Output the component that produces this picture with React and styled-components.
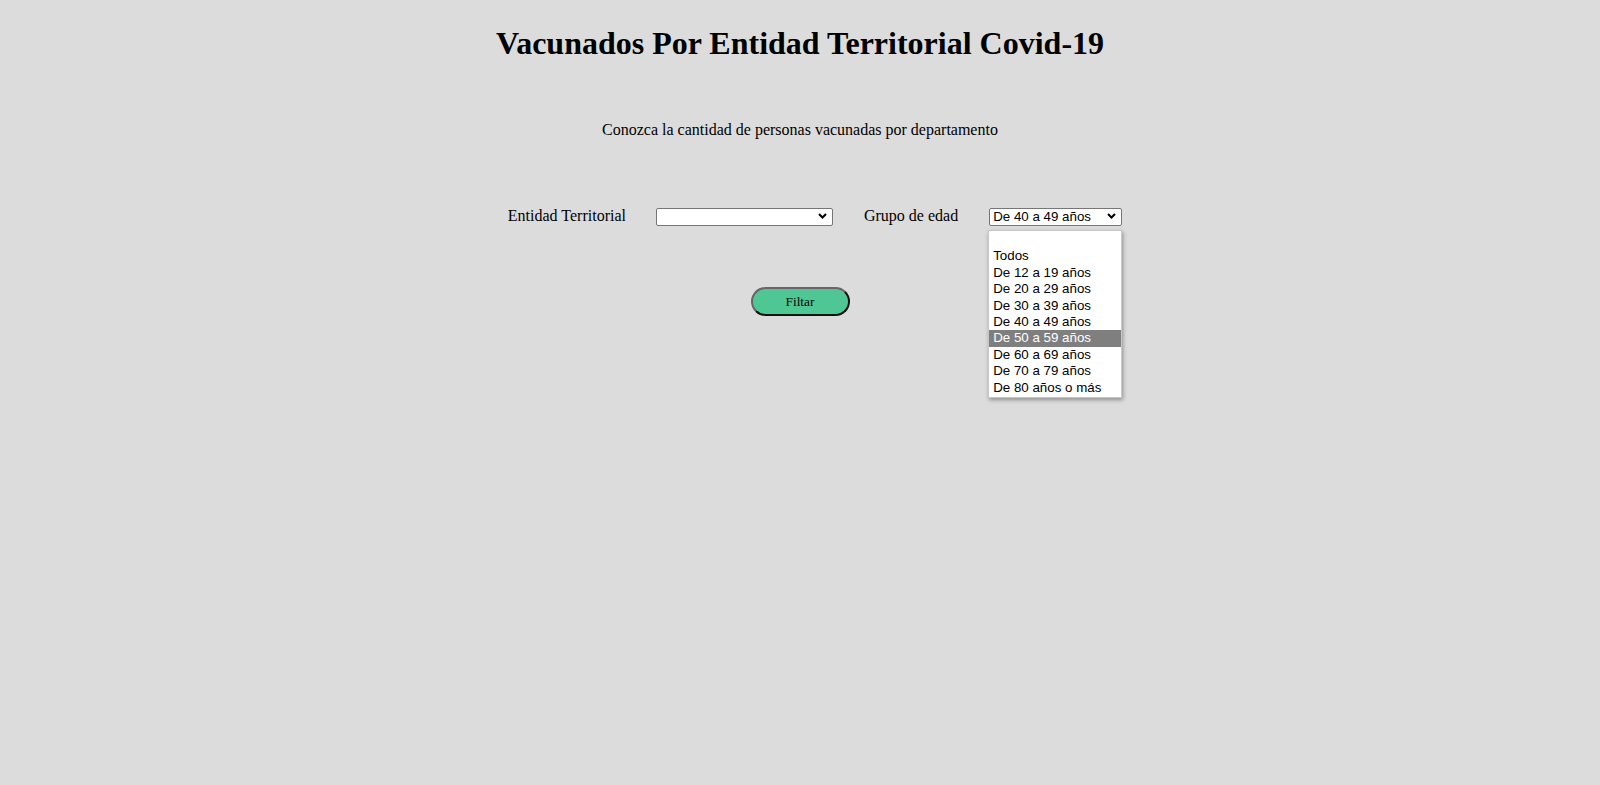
import React from "react";
import styled, { createGlobalStyle } from "styled-components";

const GlobalStyle = createGlobalStyle`
  html, body {
    margin: 0;
    padding: 0;
    background: #dcdcdc;
  }
  body {
    font-family: "Liberation Serif", "Times New Roman", serif;
    color: #000;
  }
`;

const Page = styled.main`
  display: flex;
  flex-direction: column;
  align-items: center;
  padding-top: 25px;
  min-height: 760px;
`;

const Title = styled.h1`
  margin: 0;
  font-size: 32px;
  line-height: 37px;
  font-weight: bold;
  text-align: center;
`;

const Subtitle = styled.p`
  margin: 59px 0 0;
  font-size: 16px;
  line-height: 18px;
  text-align: center;
`;

const FormRow = styled.div`
  margin-top: 67px;
  height: 20px;
  display: flex;
  align-items: center;
  justify-content: center;
  gap: 31px;
  padding-left: 30px;
`;

const Field = styled.div`
  display: flex;
  align-items: center;
  gap: ${(p) => p.$gap || 30}px;
`;

const Label = styled.label`
  font-size: 16px;
  line-height: 18px;
  white-space: nowrap;
`;

const SelectWrap = styled.div`
  position: relative;
  width: ${(p) => p.$width}px;
  height: 18px;
`;

const SelectBox = styled.select`
  appearance: none;
  -webkit-appearance: none;
  box-sizing: border-box;
  width: 100%;
  height: 100%;
  margin: 0;
  padding: 0 20px 0 3px;
  border: 1px solid #767676;
  border-radius: 2px;
  background: #fff;
  font-family: "Liberation Sans", Arial, sans-serif;
  font-size: 13.33px;
  line-height: 16px;
  color: #000;
  outline: none;
`;

const Chevron = styled.svg`
  position: absolute;
  right: 6px;
  top: 6px;
  width: 9px;
  height: 6px;
  pointer-events: none;
`;

const Dropdown = styled.ul`
  position: absolute;
  left: -1px;
  top: calc(100% + 5px);
  box-sizing: border-box;
  width: calc(100% + 1px);
  margin: 0;
  padding: 1px 0;
  list-style: none;
  background: #fff;
  border: 1px solid #c8c8c8;
  box-shadow: 1px 2px 4px rgba(0, 0, 0, 0.35);
  z-index: 10;
`;

const Option = styled.li`
  height: 16.4px;
  line-height: 16.4px;
  padding-left: 4px;
  font-family: "Liberation Sans", Arial, sans-serif;
  font-size: 13.33px;
  white-space: nowrap;
  background: ${(p) => (p.$active ? "#7f7f7f" : "transparent")};
  color: ${(p) => (p.$active ? "#fff" : "#000")};
`;

const FilterButton = styled.button`
  margin-top: 61px;
  box-sizing: border-box;
  width: 99px;
  height: 29px;
  border-radius: 15px;
  background: #4fc795;
  border: 2px solid;
  border-color: #666 #111 #111 #666;
  font-family: "Liberation Serif", "Times New Roman", serif;
  font-size: 13.33px;
  color: #000;
  padding: 0;
  cursor: pointer;
`;

const ages = [
  "",
  "Todos",
  "De 12 a 19 años",
  "De 20 a 29 años",
  "De 30 a 39 años",
  "De 40 a 49 años",
  "De 50 a 59 años",
  "De 60 a 69 años",
  "De 70 a 79 años",
  "De 80 años o más",
];

function ChevronIcon() {
  return (
    <Chevron viewBox="0 0 9 6">
      <path d="M1 1 L4.5 4.5 L8 1" fill="none" stroke="#000" strokeWidth="2" />
    </Chevron>
  );
}

export default function App() {
  return (
    <>
      <GlobalStyle />
      <Page>
        <Title>Vacunados Por Entidad Territorial Covid-19</Title>
        <Subtitle>Conozca la cantidad de personas vacunadas por departamento</Subtitle>
        <FormRow>
          <Field $gap={30}>
            <Label htmlFor="entidad">Entidad Territorial</Label>
            <SelectWrap $width={177}>
              <SelectBox id="entidad" defaultValue="">
                <option value=""></option>
              </SelectBox>
              <ChevronIcon />
            </SelectWrap>
          </Field>
          <Field $gap={31}>
            <Label htmlFor="edad">Grupo de edad</Label>
            <SelectWrap $width={133}>
              <SelectBox id="edad" defaultValue="De 40 a 49 años">
                {ages.map((a) => (
                  <option key={a} value={a}>
                    {a}
                  </option>
                ))}
              </SelectBox>
              <ChevronIcon />
              <Dropdown>
                {ages.map((a, i) => (
                  <Option key={i} $active={a === "De 50 a 59 años"}>
                    {a || "\u00a0"}
                  </Option>
                ))}
              </Dropdown>
            </SelectWrap>
          </Field>
        </FormRow>
        <FilterButton>Filtar</FilterButton>
      </Page>
    </>
  );
}
